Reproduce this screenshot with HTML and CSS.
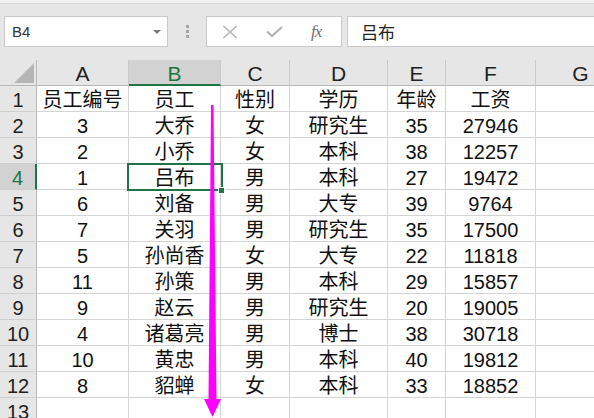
FILE: index.html
```html
<!DOCTYPE html>
<html lang="zh-CN">
<head>
<meta charset="utf-8">
<title>Sheet</title>
<link rel="stylesheet" href="styles.css">
</head>
<body>
<div class="app">
  <div class="topstrip"></div>
  <div class="formula-bar">
    <div class="namebox"><span class="nb-text">B4</span><span class="nb-caret"></span></div>
    <div class="grip"><span></span><span></span><span></span></div>
    <div class="fbuttons">
      <svg class="fb-icon" width="16" height="14" viewBox="0 0 16 14"><path d="M1.5 1 L14.5 13 M14.5 1 L1.5 13" stroke="#b4b4b4" stroke-width="1.6" fill="none"/></svg>
      <svg class="fb-icon" width="17" height="11" viewBox="0 0 17 11"><path d="M1 5.5 L6 10 L16 1" stroke="#b4b4b4" stroke-width="2.2" fill="none"/></svg>
      <span class="fx">fx</span>
    </div>
    <div class="finput">吕布</div>
  </div>
  <div class="sheet">
    <div class="grid">
      <div class="h corner"><span class="tri"></span></div>
      <div class="h">A</div><div class="h sel-col">B</div><div class="h">C</div><div class="h">D</div><div class="h">E</div><div class="h">F</div><div class="h">G</div>

      <div class="r">1</div><div class="c">员工编号</div><div class="c">员工</div><div class="c">性别</div><div class="c">学历</div><div class="c">年龄</div><div class="c">工资</div><div class="c"></div>
      <div class="r">2</div><div class="c">3</div><div class="c">大乔</div><div class="c">女</div><div class="c">研究生</div><div class="c">35</div><div class="c">27946</div><div class="c"></div>
      <div class="r">3</div><div class="c">2</div><div class="c">小乔</div><div class="c">女</div><div class="c">本科</div><div class="c">38</div><div class="c">12257</div><div class="c"></div>
      <div class="r sel-row">4</div><div class="c">1</div><div class="c">吕布</div><div class="c">男</div><div class="c">本科</div><div class="c">27</div><div class="c">19472</div><div class="c"></div>
      <div class="r">5</div><div class="c">6</div><div class="c">刘备</div><div class="c">男</div><div class="c">大专</div><div class="c">39</div><div class="c">9764</div><div class="c"></div>
      <div class="r">6</div><div class="c">7</div><div class="c">关羽</div><div class="c">男</div><div class="c">研究生</div><div class="c">35</div><div class="c">17500</div><div class="c"></div>
      <div class="r">7</div><div class="c">5</div><div class="c">孙尚香</div><div class="c">女</div><div class="c">大专</div><div class="c">22</div><div class="c">11818</div><div class="c"></div>
      <div class="r">8</div><div class="c">11</div><div class="c">孙策</div><div class="c">男</div><div class="c">本科</div><div class="c">29</div><div class="c">15857</div><div class="c"></div>
      <div class="r">9</div><div class="c">9</div><div class="c">赵云</div><div class="c">男</div><div class="c">研究生</div><div class="c">20</div><div class="c">19005</div><div class="c"></div>
      <div class="r">10</div><div class="c">4</div><div class="c">诸葛亮</div><div class="c">男</div><div class="c">博士</div><div class="c">38</div><div class="c">30718</div><div class="c"></div>
      <div class="r">11</div><div class="c">10</div><div class="c">黄忠</div><div class="c">男</div><div class="c">本科</div><div class="c">40</div><div class="c">19812</div><div class="c"></div>
      <div class="r">12</div><div class="c">8</div><div class="c">貂蝉</div><div class="c">女</div><div class="c">本科</div><div class="c">33</div><div class="c">18852</div><div class="c"></div>
      <div class="r">13</div><div class="c"></div><div class="c"></div><div class="c"></div><div class="c"></div><div class="c"></div><div class="c"></div><div class="c"></div>
    </div>
    <div class="selection"></div>
    <div class="handle"></div>
  </div>
  <svg class="arrow" width="594" height="418" viewBox="0 0 594 418">
    <polygon points="211,105 213.5,105 216.5,399 221,399 212.5,417 204,399 208.5,399" fill="#ff00ff"/>
  </svg>
</div>
</body>
</html>
```
FILE: styles.css
```css
html, body {
  margin: 0;
  padding: 0;
}
body {
  width: 594px;
  height: 418px;
  overflow: hidden;
  background: #e6e6e6;
  font-family: "Liberation Sans", "Noto Sans CJK SC", sans-serif;
  color: #111;
}
.app {
  position: relative;
  width: 594px;
  height: 418px;
  overflow: hidden;
}
.topstrip {
  height: 3px;
  background: #f0f0f0;
  border-bottom: 1px solid #d6d6d6;
}
.formula-bar {
  display: flex;
  align-items: stretch;
  height: 31px;
  margin: 12px 0 13px 4px;
}
.namebox {
  box-sizing: border-box;
  width: 164px;
  background: #fff;
  border: 1px solid #c9c9c9;
  display: flex;
  align-items: center;
  justify-content: space-between;
  padding: 0 6px 0 7px;
}
.nb-text {
  font-size: 15px;
  color: #333;
}
.nb-caret {
  width: 0;
  height: 0;
  border-left: 4px solid transparent;
  border-right: 4px solid transparent;
  border-top: 4px solid #7a7a7a;
}
.grip {
  width: 38px;
  display: flex;
  flex-direction: column;
  align-items: center;
  justify-content: center;
  gap: 2px;
}
.grip span {
  width: 3px;
  height: 3px;
  background: #a6a6a6;
}
.fbuttons {
  box-sizing: border-box;
  width: 136px;
  background: #fff;
  border: 1px solid #c9c9c9;
  display: flex;
  align-items: center;
  padding-left: 15px;
}
.fb-icon {
  display: block;
}
.fb-icon + .fb-icon {
  margin-left: 28px;
}
.fx {
  margin-left: 28px;
  font-family: "Liberation Serif", serif;
  font-style: italic;
  font-size: 17px;
  color: #6e6e6e;
  letter-spacing: -1px;
}
.finput {
  box-sizing: border-box;
  flex: 1;
  margin-left: 5px;
  margin-right: -2px;
  background: #fff;
  border: 1px solid #c9c9c9;
  display: flex;
  align-items: center;
  padding-left: 13px;
  font-size: 17px;
  color: #222;
}
.sheet {
  position: relative;
  background: #fff;
}
.grid {
  display: grid;
  grid-template-columns: 37px 92px 92px 69px 98px 58px 90px 90px;
  grid-auto-rows: 26px;
  width: 626px;
}
.grid > div {
  box-sizing: border-box;
  display: flex;
  align-items: center;
  justify-content: center;
  line-height: 1;
  padding-top: 2px;
}
.h {
  background: #e6e6e6;
  border-right: 1px solid #cacaca;
  border-bottom: 1px solid #b8b8b8;
  font-size: 21px;
  color: #222;
}
.corner {
  position: relative;
  border-right-color: #b8b8b8;
}
.tri {
  position: absolute;
  right: 2px;
  bottom: 2px;
  width: 0;
  height: 0;
  border-left: 20px solid transparent;
  border-bottom: 20px solid #b6b6b6;
}
.sel-col {
  background: #d2d2d2;
  color: #217346;
  border-bottom: 2px solid #217346;
}
.r {
  background: #e6e6e6;
  border-right: 1px solid #b8b8b8;
  border-bottom: 1px solid #cfcfcf;
  font-size: 20px;
  color: #222;
}
.sel-row {
  background: #d2d2d2;
  color: #217346;
  border-right: 2px solid #217346;
}
.c {
  background: #fff;
  border-right: 1px solid #d4d4d4;
  border-bottom: 1px solid #d4d4d4;
  font-size: 20px;
  color: #111;
}
.selection {
  position: absolute;
  left: 127px;
  top: 103px;
  width: 96px;
  height: 28px;
  box-sizing: border-box;
  border: 2px solid #217346;
}
.handle {
  position: absolute;
  left: 218px;
  top: 127px;
  width: 5px;
  height: 5px;
  background: #217346;
  border: 1px solid #fff;
}
.arrow {
  position: absolute;
  left: 0;
  top: 0;
  pointer-events: none;
}
```
